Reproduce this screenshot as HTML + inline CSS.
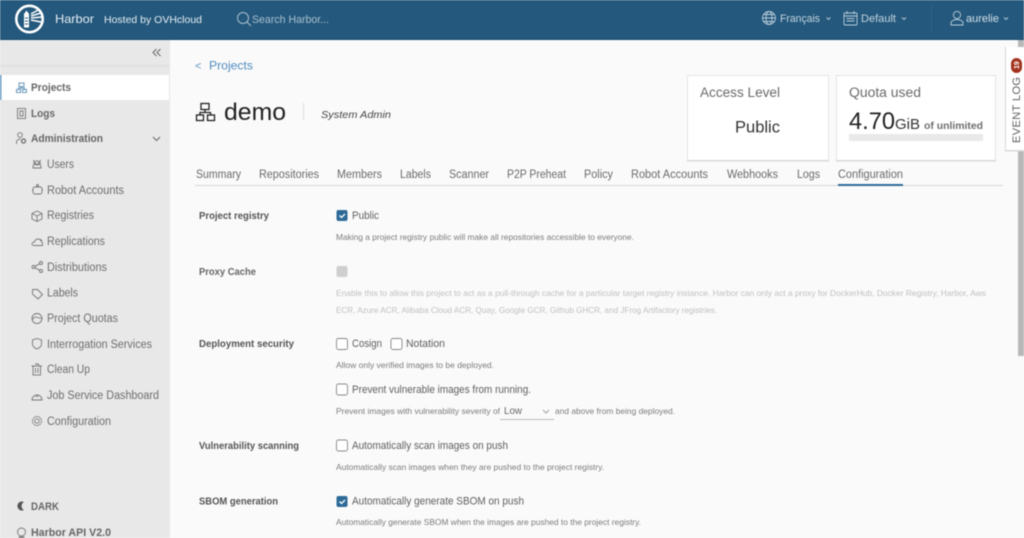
<!DOCTYPE html>
<html><head><meta charset="utf-8"><style>
html,body{margin:0;padding:0;width:1024px;height:538px;overflow:hidden;background:#fafafa}
svg{display:block;position:absolute;left:0;top:0;filter:blur(.42px)}
text{font-family:"Liberation Sans",sans-serif}
.ic{fill:none;stroke:#777;stroke-width:.9}
.s{font-size:11.5px;fill:#6e6e6e}
.t{font-size:11.5px;fill:#6a6a6a}
.l{font-size:10.5px;fill:#555;font-weight:bold}
.sb{font-size:11px;fill:#666;font-weight:bold}
.o{font-size:11px;fill:#5e5e5e}
.h{font-size:8.5px;fill:#7c7c7c}
.d{font-size:8.5px;fill:#c0c0c0}
</style></head><body>
<svg width="1024" height="538" viewBox="0 0 1024 538" xmlns="http://www.w3.org/2000/svg">
<rect width="1024" height="538" fill="#fafafa"/>
<!-- sidebar -->
<rect x="0" y="40" width="170" height="498" fill="#e8e8e8"/>
<rect x="0" y="65" width="169" height="2" fill="#e0e0e0"/>
<rect x="0" y="75" width="169" height="25" fill="#fff"/>
<rect x="0" y="75" width="1.5" height="25" fill="#6a9cc4"/>
<!-- header -->
<rect width="1024" height="40" fill="#24587c"/>
<rect y="39" width="1024" height="1" fill="#1c4a6b"/>
<circle cx="29.5" cy="19" r="13.2" fill="none" stroke="#fff" stroke-width="2.6"/>
<path d="M24 27.500V14l2.500-3.500 2.500 3.500v13.500z" fill="#fff"/>
<path d="M25 18h3M25 21h3M25 24h3" stroke="#24587c" stroke-width="1"/>
<path d="M31 14l8-4.500M31 16l10-3M31 18l11-1M31 20l10 2" stroke="#fff" stroke-width="1.500"/>
<text x="55" y="23" font-size="12" fill="#e6eef4" textLength="39" lengthAdjust="spacingAndGlyphs">Harbor</text>
<text x="104" y="23" font-size="10.5" fill="#e6eef4" textLength="98" lengthAdjust="spacingAndGlyphs">Hosted by OVHcloud</text>
<circle cx="243" cy="18" r="5.500" fill="none" stroke="#a9c0d0" stroke-width="1"/>
<path d="M247 22l4 4" stroke="#a9c0d0" stroke-width="1"/>
<text x="252" y="23" font-size="11" fill="#a9c0d0" textLength="77" lengthAdjust="spacingAndGlyphs">Search Harbor...</text>
<g fill="none" stroke="#b9cddb" stroke-width=".9">
<circle cx="769" cy="18" r="6.500"/><ellipse cx="769" cy="18" rx="3" ry="6.500"/><path d="M762.500 18h13M763.500 14.500h11M763.500 21.500h11"/>
<rect x="844" y="13" width="13" height="12" rx="1"/><path d="M847 11v3M854 11v3M844 16h13M846.500 18.500h8M846.500 21h8"/>
<circle cx="957" cy="15" r="3.600"/><path d="M951 25v-2c0-2 3-3.500 6-3.500s6 1.500 6 3.500v2z"/>
<path d="M826.500 17.500l2 2 2-2M902 17.500l2 2 2-2M1004 17.500l2 2 2-2"/>
</g>
<text x="780" y="22" font-size="11" fill="#c3d4e0" textLength="40" lengthAdjust="spacingAndGlyphs">Français</text>
<text x="861" y="22" font-size="11" fill="#c3d4e0" textLength="35" lengthAdjust="spacingAndGlyphs">Default</text>
<text x="966" y="22" font-size="11" fill="#d3e0ea" textLength="33" lengthAdjust="spacingAndGlyphs">aurelie</text>
<rect x="931" y="6" width="1" height="26" fill="#2f6486"/>
<!-- sidebar toggles -->
<path d="M156.500 49l-3.500 3.500 3.500 3.500M160.500 49l-3.500 3.500 3.500 3.500" fill="none" stroke="#666" stroke-width="1"/>
<path d="M153 137l3.500 3.500 3.500-3.500" fill="none" stroke="#666" stroke-width="1"/>
<!-- sidebar icons -->
<g class="ic" style="stroke:#5d8fb5"><rect x="19" y="83" width="5" height="3.500"/><rect x="16.500" y="89.500" width="4" height="3"/><rect x="22.500" y="89.500" width="4" height="3"/><path d="M21.500 86.500v1.500M18.500 89.500V88h6v1.500"/></g>
<g class="ic"><rect x="17.500" y="108.500" width="8" height="10"/><path d="M20 111h3v5h-3z"/></g>
<g class="ic"><circle cx="20" cy="135" r="2.300"/><path d="M16.500 144v-2c0-2 2-3 4-3"/><circle cx="23.500" cy="141" r="2" stroke-width="1.400"/></g>
<g class="ic"><circle cx="37" cy="163" r="2"/><path d="M33 168v-1.500c0-1.500 2-2.500 4-2.500s4 1 4 2.500V168zM33 160.500a1.500 1.500 0 1 1 0 3M41 160.500a1.500 1.500 0 1 0 0 3"/></g>
<g class="ic"><rect x="33" y="187" width="9" height="7" rx="2"/><circle cx="37.500" cy="185.500" r="1"/><path d="M32 190h1M42 190h1"/></g>
<g class="ic"><path d="M37 211l5 2.500v5.500l-5 2.500-5-2.500v-5.500zM32 213.500l5 2.500 5-2.500M37 216v5.500"/></g>
<g class="ic"><path d="M34 245.500h8c1.500 0 .5-2 0-2.500 0-2-1-4-4-4-2 0-3 1-3.500 3-1.500 0-2.500 1-2.500 2 0 .800 1 1.500 2 1.500zM40 241l2-1"/></g>
<g class="ic"><circle cx="33.500" cy="267" r="1.500"/><circle cx="41" cy="263" r="1.500"/><circle cx="41" cy="271" r="1.500"/><path d="M35 266.300l4.500-2.500M35 267.700l4.500 2.500"/></g>
<g class="ic"><path d="M32.500 289.500h5l5 5-4.500 4.500-5.500-5z"/></g>
<g class="ic"><circle cx="37" cy="318.500" r="5"/><path d="M32.500 319.500c1-2 3-3 5-2l4 1"/></g>
<g class="ic"><path d="M37 338.500l4.500 1.500v4c0 2.500-2 4-4.500 5-2.500-1-4.500-2.500-4.500-5v-4z"/></g>
<g class="ic"><rect x="33" y="366" width="7.500" height="9"/><path d="M31.500 366h10.500M35 364h3.500v2M35.500 368v5M38 368v5"/></g>
<g class="ic"><path d="M32 400a5 5 0 1 1 10 0zM36 397l3-2"/></g>
<g class="ic"><circle cx="37" cy="421" r="2.200"/><circle cx="37" cy="421" r="4.500" stroke-dasharray="2.200 .6"/></g>
<path d="M24 502a4.500 4.500 0 1 0 0 8 4.500 4.500 0 0 1 0-8z" fill="#555"/>
<g class="ic"><circle cx="21.500" cy="532" r="4"/><path d="M19 537h5v1h-5z"/></g>
<!-- sidebar text -->
<text x="31" y="91" class="sb" textLength="40" lengthAdjust="spacingAndGlyphs">Projects</text>
<text x="31" y="117" class="sb" textLength="24" lengthAdjust="spacingAndGlyphs">Logs</text>
<text x="31" y="142" class="sb" textLength="72" lengthAdjust="spacingAndGlyphs">Administration</text>
<text x="47" y="168" class="s" textLength="27" lengthAdjust="spacingAndGlyphs">Users</text>
<text x="47" y="194" class="s" textLength="77" lengthAdjust="spacingAndGlyphs">Robot Accounts</text>
<text x="47" y="219" class="s" textLength="47" lengthAdjust="spacingAndGlyphs">Registries</text>
<text x="47" y="245" class="s" textLength="58" lengthAdjust="spacingAndGlyphs">Replications</text>
<text x="47" y="271" class="s" textLength="60" lengthAdjust="spacingAndGlyphs">Distributions</text>
<text x="47" y="296.500" class="s" textLength="31" lengthAdjust="spacingAndGlyphs">Labels</text>
<text x="47" y="322" class="s" textLength="71" lengthAdjust="spacingAndGlyphs">Project Quotas</text>
<text x="47" y="348" class="s" textLength="105" lengthAdjust="spacingAndGlyphs">Interrogation Services</text>
<text x="47" y="373" class="s" textLength="43" lengthAdjust="spacingAndGlyphs">Clean Up</text>
<text x="47" y="399" class="s" textLength="112" lengthAdjust="spacingAndGlyphs">Job Service Dashboard</text>
<text x="47" y="425" class="s" textLength="64" lengthAdjust="spacingAndGlyphs">Configuration</text>
<text x="31" y="510" class="sb" textLength="28" lengthAdjust="spacingAndGlyphs">DARK</text>
<text x="31" y="536" class="sb" textLength="80" lengthAdjust="spacingAndGlyphs">Harbor API V2.0</text>
<!-- content header -->
<text x="195" y="69.500" font-size="11" fill="#5a93c2">&lt;</text>
<text x="209" y="69.500" font-size="12" fill="#4f8bbd" textLength="44" lengthAdjust="spacingAndGlyphs">Projects</text>
<g fill="none" stroke="#222" stroke-width="1.300"><rect x="201" y="103.500" width="8" height="6"/><rect x="196.500" y="115" width="7" height="5.500"/><rect x="207.500" y="115" width="7" height="5.500"/><path d="M205 109.500v3M200 115v-2.500h10.500V115"/></g>
<text x="224" y="120" font-size="24" fill="#222" textLength="62" lengthAdjust="spacingAndGlyphs">demo</text>
<rect x="303" y="103" width="1" height="17" fill="#ddd"/>
<text x="321" y="118" font-size="10.5" font-style="italic" fill="#444" textLength="70" lengthAdjust="spacingAndGlyphs">System Admin</text>
<!-- cards -->
<rect x="687.500" y="75.500" width="141" height="85" fill="#fff" stroke="#e4e4e4"/>
<rect x="687" y="160" width="142" height="1.500" fill="#d8d8d8"/>
<rect x="836.500" y="75.500" width="159" height="85" fill="#fff" stroke="#e4e4e4"/>
<rect x="836" y="160" width="160" height="1.500" fill="#d8d8d8"/>
<text x="700" y="97" font-size="13.5" fill="#6a6a6a" textLength="80" lengthAdjust="spacingAndGlyphs">Access Level</text>
<text x="735" y="132.500" font-size="16.5" fill="#333" textLength="45" lengthAdjust="spacingAndGlyphs">Public</text>
<text x="849" y="97" font-size="13.5" fill="#6a6a6a" textLength="72" lengthAdjust="spacingAndGlyphs">Quota used</text>
<text x="849" y="129" font-size="24" fill="#222" textLength="46" lengthAdjust="spacingAndGlyphs">4.70</text>
<text x="895" y="129" font-size="14.5" fill="#333" textLength="25" lengthAdjust="spacingAndGlyphs">GiB</text>
<text x="924" y="129" font-size="10.5" font-weight="bold" fill="#6e6e6e" textLength="59" lengthAdjust="spacingAndGlyphs">of unlimited</text>
<rect x="849" y="134" width="134" height="7" fill="#e9e9e9"/>
<!-- tabs -->
<rect x="195" y="185" width="808" height="1" fill="#d7d7d7"/>
<text x="196" y="178" class="t" textLength="45" lengthAdjust="spacingAndGlyphs">Summary</text>
<text x="259" y="178" class="t" textLength="60" lengthAdjust="spacingAndGlyphs">Repositories</text>
<text x="337" y="178" class="t" textLength="45" lengthAdjust="spacingAndGlyphs">Members</text>
<text x="400" y="178" class="t" textLength="31" lengthAdjust="spacingAndGlyphs">Labels</text>
<text x="449" y="178" class="t" textLength="40" lengthAdjust="spacingAndGlyphs">Scanner</text>
<text x="507" y="178" class="t" textLength="59" lengthAdjust="spacingAndGlyphs">P2P Preheat</text>
<text x="584" y="178" class="t" textLength="29" lengthAdjust="spacingAndGlyphs">Policy</text>
<text x="631" y="178" class="t" textLength="77" lengthAdjust="spacingAndGlyphs">Robot Accounts</text>
<text x="727" y="178" class="t" textLength="51" lengthAdjust="spacingAndGlyphs">Webhooks</text>
<text x="797" y="178" class="t" textLength="23" lengthAdjust="spacingAndGlyphs">Logs</text>
<text x="838" y="178" class="t" textLength="65" lengthAdjust="spacingAndGlyphs">Configuration</text>
<rect x="838" y="184" width="65" height="2" fill="#2d6a97"/>
<!-- form labels -->
<text x="199" y="219" class="l" textLength="70" lengthAdjust="spacingAndGlyphs">Project registry</text>
<text x="199" y="275" class="l" style="fill:#666" textLength="57" lengthAdjust="spacingAndGlyphs">Proxy Cache</text>
<text x="199" y="347" class="l" textLength="95" lengthAdjust="spacingAndGlyphs">Deployment security</text>
<text x="199" y="449" class="l" textLength="100" lengthAdjust="spacingAndGlyphs">Vulnerability scanning</text>
<text x="199" y="504.500" class="l" textLength="79" lengthAdjust="spacingAndGlyphs">SBOM generation</text>
<!-- checkboxes -->
<rect x="336.500" y="210" width="11" height="11" rx="2" fill="#2d6a97"/>
<path d="M339.500 215.500l2 2 3.500-3.500" fill="none" stroke="#fff" stroke-width="1.300"/>
<rect x="336.500" y="266" width="11" height="11" rx="2" fill="#cfcfcf"/>
<g fill="#fff" stroke="#888" stroke-width=".9">
<rect x="336.500" y="338.500" width="11" height="11" rx="2"/>
<rect x="391" y="338.500" width="11" height="11" rx="2"/>
<rect x="336.500" y="384" width="11" height="11" rx="2"/>
<rect x="336.500" y="440" width="11" height="11" rx="2"/>
</g>
<rect x="336.500" y="496" width="11" height="11" rx="2" fill="#2d6a97"/>
<path d="M339.500 501.500l2 2 3.500-3.500" fill="none" stroke="#fff" stroke-width="1.300"/>
<!-- options -->
<text x="352" y="219" class="o" textLength="27" lengthAdjust="spacingAndGlyphs">Public</text>
<text x="352" y="347" class="o" textLength="30" lengthAdjust="spacingAndGlyphs">Cosign</text>
<text x="406" y="347" class="o" textLength="39" lengthAdjust="spacingAndGlyphs">Notation</text>
<text x="352" y="393" class="o" textLength="179" lengthAdjust="spacingAndGlyphs">Prevent vulnerable images from running.</text>
<text x="352" y="449" class="o" textLength="156" lengthAdjust="spacingAndGlyphs">Automatically scan images on push</text>
<text x="352" y="504.500" class="o" textLength="172" lengthAdjust="spacingAndGlyphs">Automatically generate SBOM on push</text>
<!-- help -->
<text x="336" y="240" class="h" textLength="298" lengthAdjust="spacingAndGlyphs">Making a project registry public will make all repositories accessible to everyone.</text>
<text x="336" y="296" class="d" textLength="650" lengthAdjust="spacingAndGlyphs">Enable this to allow this project to act as a pull-through cache for a particular target registry instance. Harbor can only act a proxy for DockerHub, Docker Registry, Harbor, Aws</text>
<text x="336" y="313" class="d" textLength="381" lengthAdjust="spacingAndGlyphs">ECR, Azure ACR, Alibaba Cloud ACR, Quay, Google GCR, Github GHCR, and JFrog Artifactory registries.</text>
<text x="336" y="368" class="h" textLength="158" lengthAdjust="spacingAndGlyphs">Allow only verified images to be deployed.</text>
<text x="336" y="414" class="h" textLength="164" lengthAdjust="spacingAndGlyphs">Prevent images with vulnerability severity of</text>
<text x="504" y="414" font-size="10.5" fill="#666" textLength="18" lengthAdjust="spacingAndGlyphs">Low</text>
<path d="M543 410l3 3 3-3" fill="none" stroke="#888" stroke-width=".8"/>
<rect x="500" y="419" width="54" height="1" fill="#bbb"/>
<text x="555" y="414" class="h" textLength="120" lengthAdjust="spacingAndGlyphs">and above from being deployed.</text>
<text x="336" y="470" class="h" textLength="268" lengthAdjust="spacingAndGlyphs">Automatically scan images when they are pushed to the project registry.</text>
<text x="336" y="525" class="h" textLength="305" lengthAdjust="spacingAndGlyphs">Automatically generate SBOM when the images are pushed to the project registry.</text>
<!-- scrollbar -->
<rect x="1018" y="40" width="6" height="498" fill="#fafafa"/>
<rect x="1018" y="40" width="6" height="316" fill="#b8b8b8"/>
<!-- event log -->
<rect x="1006" y="47" width="18" height="103" fill="#fff"/>
<rect x="1005" y="47" width="1" height="104" fill="#d8d8d8"/>
<rect x="1005" y="150" width="19" height="1.500" fill="#d8d8d8"/>
<text transform="translate(1020,143) rotate(-90)" font-size="11" fill="#5e5e5e" textLength="66" lengthAdjust="spacing">EVENT LOG</text>
<rect x="1011" y="58" width="11" height="15" rx="5.500" fill="#a3341f"/>
<text transform="translate(1019,69) rotate(-90)" font-size="7" font-weight="bold" fill="#fff">19</text>
</svg>
</body></html>
